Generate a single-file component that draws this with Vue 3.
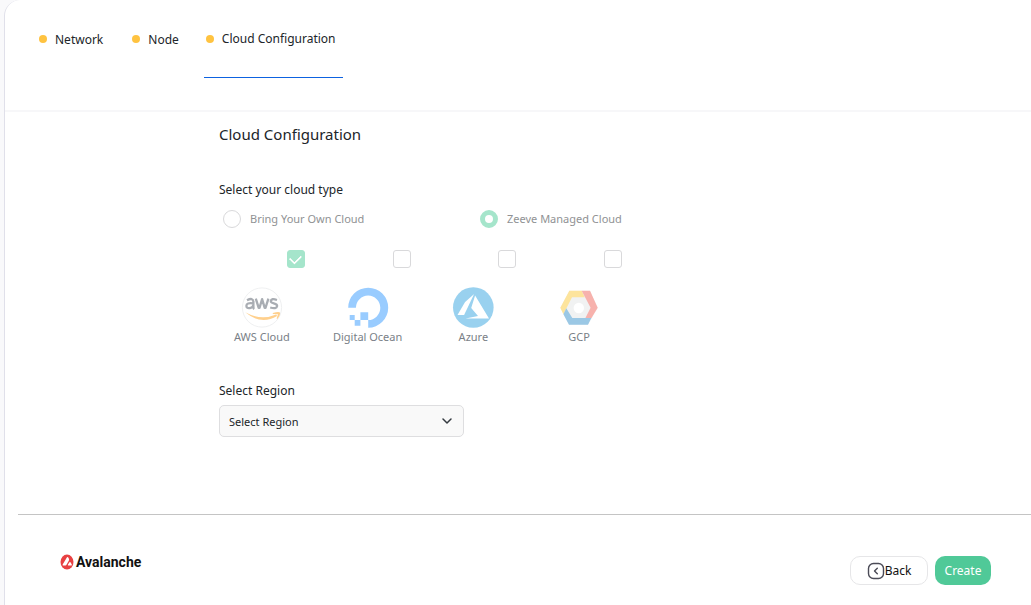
<script setup>
import { ref } from 'vue'

const steps = ['Network', 'Node', 'Cloud Configuration']
const current = ref('Cloud Configuration')
const cloudType = ref('managed')
const region = ref('')
const providers = ref([
  { id: 'aws', name: 'AWS Cloud', checked: true },
  { id: 'ocean', name: 'Digital Ocean', checked: false },
  { id: 'azure', name: 'Azure', checked: false },
  { id: 'gcp', name: 'GCP', checked: false }
])
</script>

<template>
  <div class="panel">
    <nav class="steps">
      <a
        v-for="s in steps"
        :key="s"
        href="#"
        class="step"
        :class="{ active: s === current }"
        @click.prevent="current = s"
      ><span class="dot"></span>{{ s }}</a>
    </nav>

    <main class="content">
      <h1>Cloud Configuration</h1>

      <h2 id="type-title">Select your cloud type</h2>
      <div class="types" role="radiogroup" aria-labelledby="type-title">
        <label class="type"><input v-model="cloudType" type="radio" name="cloud" value="own" />Bring Your Own Cloud</label>
        <label class="type"><input v-model="cloudType" type="radio" name="cloud" value="managed" />Zeeve Managed Cloud</label>
      </div>

      <div class="providers">
        <label v-for="p in providers" :key="p.id" class="provider">
          <input v-model="p.checked" type="checkbox" />
          <svg v-if="p.id === 'aws'" class="logo" viewBox="0 0 42 42" aria-hidden="true">
            <circle cx="21" cy="20.500" r="19.600" fill="#fff" stroke="#eff0f1" />
            <g fill="none" stroke="#a9adb3" stroke-width="2.300">
              <path d="M6 13.200q6-3 6.400 1.400v5.800q0 1 .9 1.600M12.200 16.400q-6.800-1-6.800 2.400 0 2.600 3 2.400 2.800-.2 3.800-2.600" />
              <path d="M14.800 11.600l2.900 9.200h.8l2.600-8.600 2.600 8.600h.8l2.900-9.200" stroke-linejoin="round" />
              <path d="M36 13q-5.800-2-6.200 1-.2 1.600 3 2.300 3.600.8 3.300 2.800-.6 3.200-6.900 1.400" />
            </g>
            <path d="M4.200 25.300q15.800 8.700 31 2.200l.9 1.600Q20 38.500 4.200 25.300z" fill="#ffd08d" />
            <path d="M31.800 26q6.200-2 7.200-.4.600 2.400-2.600 6.400l-.8-.6 1.400-4.200-5.200-.1z" fill="#ffd08d" />
          </svg>
          <svg v-else-if="p.id === 'ocean'" class="logo" viewBox="0 0 42 42" fill="#99ccff" aria-hidden="true">
            <path d="M21.200 40.700v-7.700a12.200 12.200 0 1 0-12.300-12.300H1.200a20 20 0 1 1 20 20z" />
            <path d="M13.400 25.300h7.800V33h-7.800zM7.700 33h5.700v5.700H7.700zM2.700 28h5v5h-5z" />
          </svg>
          <svg v-else-if="p.id === 'azure'" class="logo" viewBox="0 0 42 42" aria-hidden="true">
            <circle cx="21.300" cy="20.500" r="20.300" fill="#99d1ef" />
            <path d="M22.100 7L13.100 15 5.500 28h6.600z" fill="#fff" />
            <path d="M23.100 8.500l13.900 23H13.500l12.500-2.400-6.800-8z" fill="#fff" />
          </svg>
          <svg v-else class="logo" viewBox="0 0 42 42" aria-hidden="true">
            <path d="M11.500 3.700H32l7.700 17L30 37.700H11L2.500 20.700z" fill="#f1f2f2" />
            <path d="M11.300 3.700h12.400l3 6.600H14L5.400 27.300 2.300 20.700z" fill="#fde49c" />
            <path d="M23.700 3.700H32l7.700 17L33.300 31.300h-6l5.300-10.600z" fill="#f7b2ad" />
            <path d="M8.300 21.300l6 9.600h19l-3.300 6.800H11L5.400 27.300z" fill="#9bc8e5" />
            <circle cx="20.800" cy="21" r="5.200" fill="#fff" />
          </svg>
          <span>{{ p.name }}</span>
        </label>
      </div>

      <label class="region-label" for="region">Select Region</label>
      <div class="select">
        <select id="region" v-model="region">
          <option value="">Select Region</option>
          <option value="us">US East</option>
          <option value="eu">Europe</option>
        </select>
        <svg viewBox="0 0 12 12" aria-hidden="true"><path d="M2 4l4 4 4-4" fill="none" stroke="#343a40" stroke-width="1.500" stroke-linecap="round" stroke-linejoin="round" /></svg>
      </div>
    </main>

    <footer class="footer">
      <div class="brand">
        <svg viewBox="0 0 14 16" aria-hidden="true">
          <ellipse cx="7" cy="8" rx="6.500" ry="7.500" fill="#e84142" />
          <path d="M7 3.200q.8-.6 1.400.5l.6 1.300q.2.700-.1 1.400l-2.400 4.400q-.4.700-1.100.700H3.200q-1-.1-.5-1.100zM9.500 8.200q.5-.5 1 0l1.300 2.300q.3.900-.5 1H8.400q-.8-.2-.4-1z" fill="#fff" />
        </svg>
        <span>Avalanche</span>
      </div>
      <div class="actions">
        <button type="button" class="back">
          <svg viewBox="0 0 18 18" fill="none" stroke="#4b4b57" stroke-width="1.400" stroke-linecap="round" stroke-linejoin="round" aria-hidden="true">
            <rect x="1.500" y="1.500" width="15" height="15" rx="5" />
            <path d="M10.300 6.200L7.500 9l2.800 2.800" />
          </svg>Back
        </button>
        <button type="button" class="create">Create</button>
      </div>
    </footer>
  </div>
</template>

<style>
body {
  margin: 0;
  background: #f9f9fb;
}
</style>

<style scoped>
* {
  box-sizing: border-box;
}
.panel {
  min-height: 100vh;
  margin-left: 4px;
  border-left: 1px solid #e0e0ea;
  border-top-left-radius: 16px;
  background: #fff;
  color: #212529;
  font-family: "Noto Sans", sans-serif;
  font-size: 12px;
  display: flex;
  flex-direction: column;
}
.steps {
  display: flex;
  height: 112px;
  padding: 0 26px;
  gap: 13px;
  border-bottom: 2px solid #f7f7f9;
}
.step {
  display: flex;
  align-items: center;
  height: 78px;
  padding: 0 8px;
  color: inherit;
  text-decoration: none;
  white-space: nowrap;
}
.step.active {
  padding: 0 7px 0 2px;
  border-bottom: 1px solid #0d62e0;
  margin-left: 4px;
}
.dot {
  width: 8px;
  height: 8px;
  margin-right: 8px;
  border-radius: 50%;
  background: #ffc340;
}
.content {
  padding: 10px 24px 0 214px;
}
h1,
h2 {
  margin: 0;
  font-weight: 400;
}
h1 {
  font-size: 15px;
  line-height: 24px;
}
h2 {
  margin-top: 34px;
  font-size: 12px;
  line-height: 20px;
}
.types {
  display: grid;
  grid-template-columns: 257px auto;
  justify-content: start;
  margin-top: 10px;
  padding-left: 4px;
  font-size: 11px;
  line-height: 16px;
  color: #909294;
}
.type {
  display: flex;
  align-items: center;
  gap: 9px;
}
input {
  appearance: none;
  width: 18px;
  height: 18px;
  margin: 0;
  border: 1px solid #d9d9db;
  background: #fff;
}
input[type="radio"] {
  border-radius: 50%;
}
input[type="radio"]:checked {
  border: 5px solid #a5e5cb;
}
input[type="checkbox"] {
  display: grid;
  place-items: center;
  align-self: flex-end;
  margin-right: 10px;
  border-radius: 3px;
}
input[type="checkbox"]:checked {
  background: #a5e5cb;
  border-color: #a5e5cb;
}
input[type="checkbox"]:checked::after {
  content: "";
  width: 9px;
  height: 6px;
  border-left: 2px solid #fff;
  border-bottom: 2px solid #fff;
  border-radius: 1px;
  transform: translateY(-1px) rotate(-45deg);
}
.providers {
  display: grid;
  grid-template-columns: repeat(4, 1fr);
  width: 100%;
  max-width: 423px;
  margin: 22px 0 0 -10px;
  font-size: 11px;
  line-height: 16px;
  color: #7a7f87;
}
.provider {
  display: flex;
  flex-direction: column;
  align-items: center;
}
.logo {
  width: 42px;
  height: 42px;
  margin-top: 19px;
}
.region-label {
  display: block;
  margin-top: 36px;
  line-height: 20px;
}
.select {
  position: relative;
  width: 100%;
  max-width: 245px;
  margin-top: 4px;
}
.select select {
  appearance: none;
  display: block;
  width: 100%;
  height: 32px;
  padding: 0 32px 0 9px;
  border: 1px solid #dedee0;
  border-radius: 5px;
  background: #f9f9f9;
  color: #212529;
  font: inherit;
  font-size: 11px;
}
.select svg {
  position: absolute;
  top: 10px;
  right: 11px;
  width: 12px;
  height: 12px;
  pointer-events: none;
}
.footer {
  display: flex;
  justify-content: space-between;
  align-items: flex-start;
  margin: 77px 0 0 13px;
  padding: 41px 40px 20px 42px;
  border-top: 1px solid #c4c4c4;
}
.brand {
  display: flex;
  align-items: center;
  gap: 2px;
  margin-top: -2px;
  font: 700 14px/16px Roboto, "Liberation Sans", sans-serif;
  color: #111;
}
.brand svg {
  width: 14px;
  height: 16px;
}
.actions {
  display: flex;
  gap: 7px;
}
button {
  display: flex;
  align-items: center;
  justify-content: center;
  height: 29px;
  padding: 0;
  border-radius: 10px;
  font: inherit;
}
.back {
  width: 78px;
  border: 1px solid #e6e6e8;
  background: #fff;
  color: #111;
}
.back svg {
  width: 18px;
  height: 18px;
}
.create {
  width: 56px;
  border: 0;
  background: #50c998;
  color: #fff;
}
</style>
